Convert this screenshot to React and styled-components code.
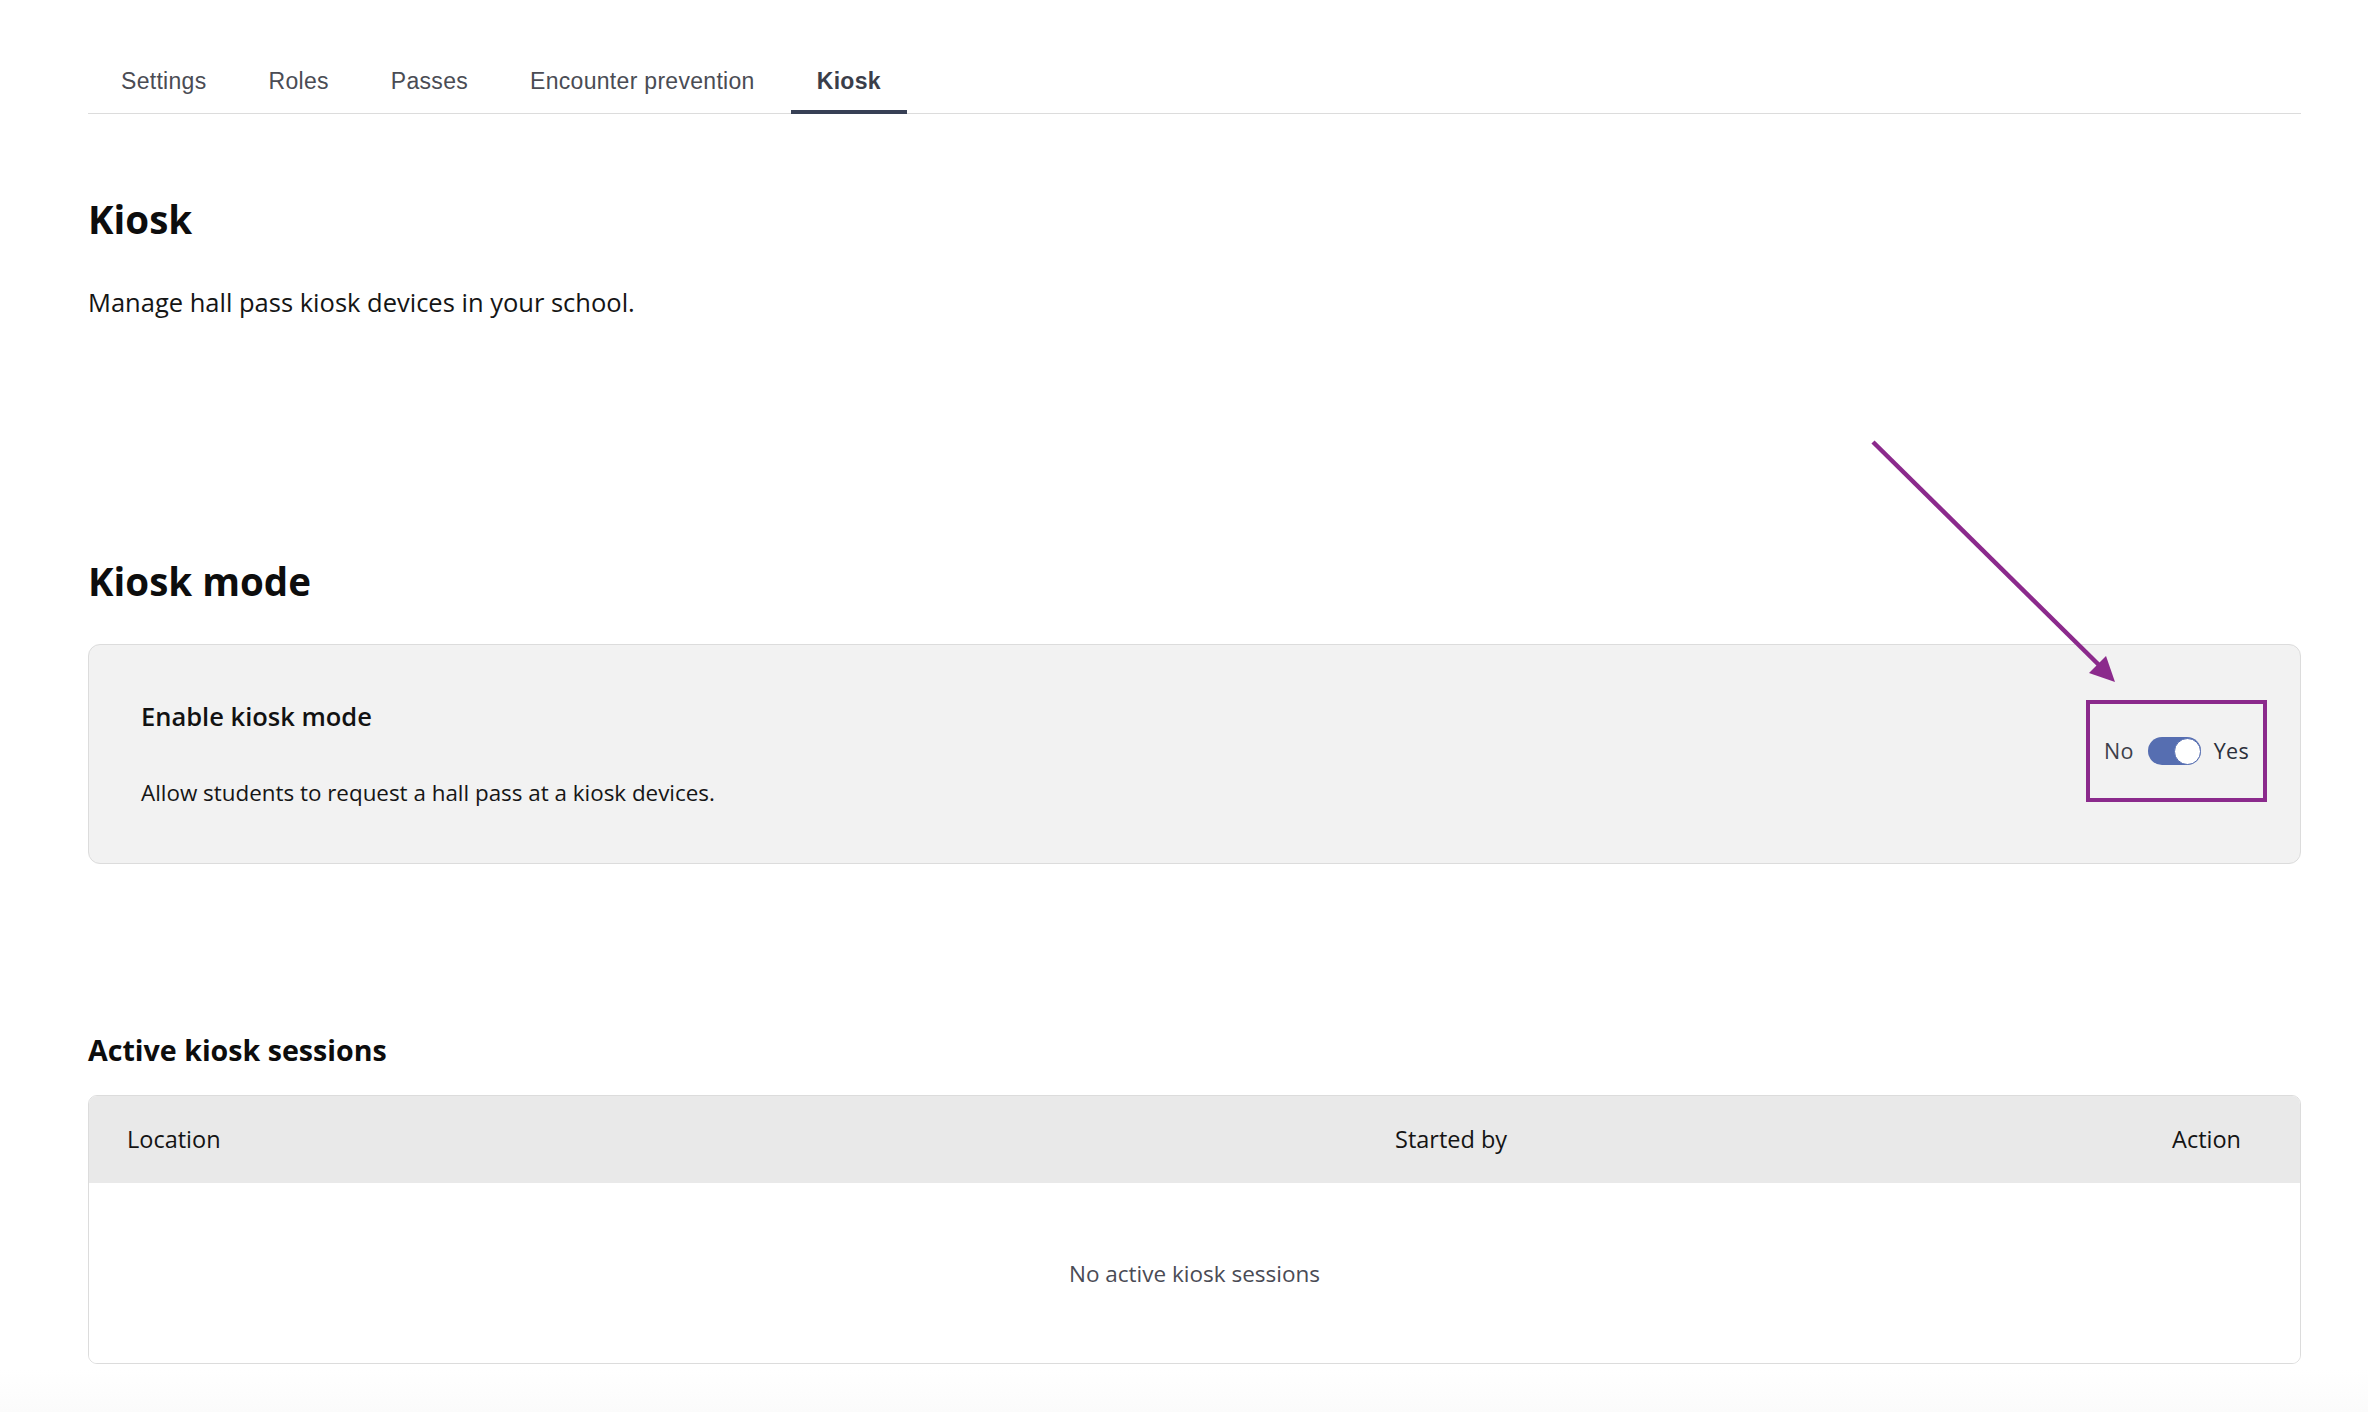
import React from "react";
import styled, { createGlobalStyle } from "styled-components";

const GlobalStyle = createGlobalStyle`
  html, body {
    margin: 0;
    padding: 0;
    background: #ffffff;
  }
  body {
    font-family: "Open Sans", "Noto Sans", sans-serif;
    color: #111111;
  }
  * { box-sizing: border-box; }
`;

const Page = styled.div`
  position: relative;
  min-height: 1412px;
  padding: 48px 67px 40px 88px;
  background: linear-gradient(to bottom, #ffffff 0, #ffffff 1370px, #fbfbfb 1412px);
`;

const TabBar = styled.nav`
  display: flex;
  gap: 10px;
  padding-left: 7px;
  border-bottom: 1.5px solid #dcdcdc;
`;

const Tab = styled.div`
  padding: 19px 26px 15px;
  margin-bottom: -1.5px;
  line-height: 28px;
  font-family: "Liberation Sans", Arial, sans-serif;
  font-size: 23px;
  letter-spacing: 0.3px;
  font-weight: ${(p) => (p.$active ? 700 : 400)};
  color: ${(p) => (p.$active ? "#3a3e4a" : "#4a4c54")};
  border-bottom: 4.5px solid ${(p) => (p.$active ? "#374055" : "transparent")};
`;

const PageTitle = styled.h1`
  margin: 82px 0 0;
  font-size: 38.5px;
  line-height: 46px;
  font-weight: 700;
  color: #0d0d0d;
`;

const Lead = styled.p`
  margin: 42px 0 0;
  font-size: 25.5px;
  line-height: 36px;
  color: #151515;
`;

const SectionTitle = styled.h2`
  margin: 238px 0 0;
  font-size: 38.5px;
  line-height: 46px;
  font-weight: 700;
  color: #0d0d0d;
`;

const Card = styled.section`
  margin-top: 40.5px;
  display: flex;
  align-items: center;
  justify-content: space-between;
  padding: 0 33px 0 52px;
  background: #f2f2f2;
  border: 1.5px solid #dcdcdc;
  border-radius: 12px;
`;

const CardText = styled.div`
  display: flex;
  flex-direction: column;
  gap: 46px;
  padding: 55px 0 55px;
`;

const CardTitle = styled.div`
  font-size: 25.5px;
  line-height: 32px;
  font-weight: 600;
  color: #121212;
`;

const CardDesc = styled.div`
  font-size: 22.4px;
  line-height: 30px;
  color: #161616;
`;

const Highlight = styled.div`
  display: flex;
  align-items: center;
  width: 181px;
  height: 102px;
  padding: 0 14px;
  border: 4.5px solid #8b2a8c;
  margin-top: -6px;
`;

const SwitchLabel = styled.span`
  font-size: 21.5px;
  line-height: 28px;
  color: ${(p) => (p.$on ? "#2b2f3a" : "#3d404a")};
  font-weight: ${(p) => (p.$on ? 500 : 400)};
  letter-spacing: 0.3px;
`;

const Track = styled.div`
  display: flex;
  justify-content: flex-end;
  align-items: center;
  width: 56px;
  height: 28px;
  margin: 0 13px 0 14px;
  border-radius: 14px;
  background: #566eb1;
`;

const Knob = styled.div`
  width: 27px;
  height: 27px;
  border-radius: 50%;
  background: #ffffff;
  border: 1.5px solid #566eb1;
`;

const TableTitle = styled.h3`
  margin: 166.5px 0 0;
  font-size: 28.6px;
  line-height: 38px;
  font-weight: 700;
  color: #0d0d0d;
`;

const Table = styled.div`
  margin-top: 26px;
  border: 1.5px solid #dcdcdc;
  border-radius: 9px;
  overflow: hidden;
`;

const HeadRow = styled.div`
  display: grid;
  grid-template-columns: 1268px 1fr auto;
  align-items: center;
  height: 87px;
  padding: 0 59px 0 38px;
  background: #e9e9e9;
`;

const HeadCell = styled.div`
  font-size: 23.5px;
  line-height: 30px;
  font-weight: 500;
  color: #141414;
`;

const EmptyRow = styled.div`
  display: flex;
  align-items: center;
  justify-content: center;
  height: 180px;
  padding-top: 2px;
  background: #ffffff;
  font-size: 22.5px;
  color: #4a4b55;
`;

const Annotation = styled.svg`
  position: absolute;
  left: 0;
  top: 0;
  width: 2368px;
  height: 1412px;
  pointer-events: none;
`;

const tabs = ["Settings", "Roles", "Passes", "Encounter prevention", "Kiosk"];

export default function App() {
  return (
    <>
      <GlobalStyle />
      <Page>
        <TabBar>
          {tabs.map((t) => (
            <Tab key={t} $active={t === "Kiosk"}>
              {t}
            </Tab>
          ))}
        </TabBar>

        <PageTitle>Kiosk</PageTitle>
        <Lead>Manage hall pass kiosk devices in your school.</Lead>

        <SectionTitle>Kiosk mode</SectionTitle>
        <Card>
          <CardText>
            <CardTitle>Enable kiosk mode</CardTitle>
            <CardDesc>Allow students to request a hall pass at a kiosk devices.</CardDesc>
          </CardText>
          <Highlight>
            <SwitchLabel>No</SwitchLabel>
            <Track>
              <Knob />
            </Track>
            <SwitchLabel $on>Yes</SwitchLabel>
          </Highlight>
        </Card>

        <TableTitle>Active kiosk sessions</TableTitle>
        <Table>
          <HeadRow>
            <HeadCell>Location</HeadCell>
            <HeadCell>Started by</HeadCell>
            <HeadCell>Action</HeadCell>
          </HeadRow>
          <EmptyRow>No active kiosk sessions</EmptyRow>
        </Table>

        <Annotation viewBox="0 0 2368 1412">
          <line x1="1873" y1="442" x2="2100" y2="666" stroke="#8b2a8c" strokeWidth="4.5" />
          <polygon points="2115,682 2089,673 2106,656" fill="#8b2a8c" />
        </Annotation>
      </Page>
    </>
  );
}
